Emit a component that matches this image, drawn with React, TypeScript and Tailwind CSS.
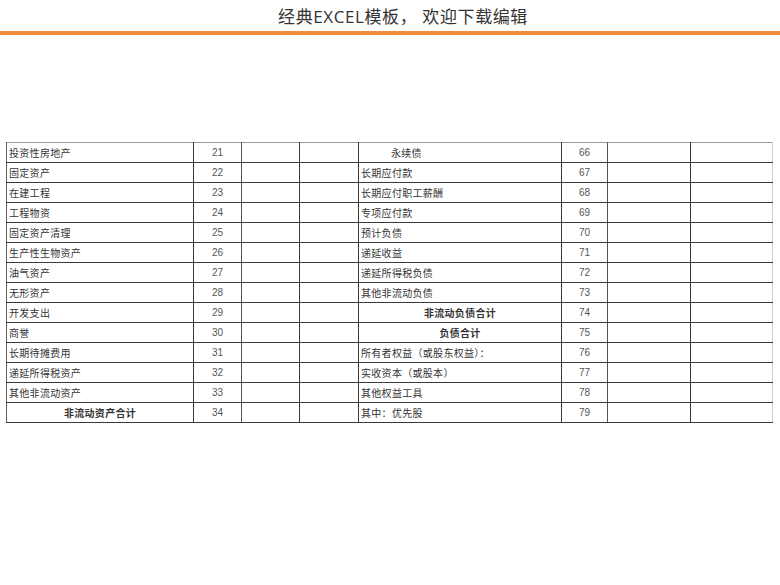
import React from 'react';

type Row = {
  left: string;
  leftNo: number;
  leftBold?: boolean;
  right: string;
  rightNo: number;
  rightBold?: boolean;
  rightIndent?: boolean;
};

const rows: Row[] = [
  { left: '投资性房地产', leftNo: 21, right: '永续债', rightNo: 66, rightIndent: true },
  { left: '固定资产', leftNo: 22, right: '长期应付款', rightNo: 67 },
  { left: '在建工程', leftNo: 23, right: '长期应付职工薪酬', rightNo: 68 },
  { left: '工程物资', leftNo: 24, right: '专项应付款', rightNo: 69 },
  { left: '固定资产清理', leftNo: 25, right: '预计负债', rightNo: 70 },
  { left: '生产性生物资产', leftNo: 26, right: '递延收益', rightNo: 71 },
  { left: '油气资产', leftNo: 27, right: '递延所得税负债', rightNo: 72 },
  { left: '无形资产', leftNo: 28, right: '其他非流动负债', rightNo: 73 },
  { left: '开发支出', leftNo: 29, right: '非流动负债合计', rightNo: 74, rightBold: true },
  { left: '商誉', leftNo: 30, right: '负债合计', rightNo: 75, rightBold: true },
  { left: '长期待摊费用', leftNo: 31, right: '所有者权益（或股东权益）：', rightNo: 76 },
  { left: '递延所得税资产', leftNo: 32, right: '实收资本（或股本）', rightNo: 77 },
  { left: '其他非流动资产', leftNo: 33, right: '其他权益工具', rightNo: 78 },
  { left: '非流动资产合计', leftNo: 34, leftBold: true, right: '其中：优先股', rightNo: 79 },
];

const cell = 'border-b border-[#3a3a3a] h-[20px] p-0 align-middle';
const label = 'text-[10px] text-[#333] px-[2px] tracking-[0.3px]';
const num = 'text-[10px] text-[#555] text-center font-["Liberation_Sans",sans-serif]';

const App: React.FC = () => {
  return (
    <div className="w-[780px] h-[585px] bg-white overflow-hidden font-['Noto_Sans_CJK_SC',sans-serif]">
      <div className="h-[31px] flex items-center justify-center">
        <h1 className="text-[17px] text-[#333] tracking-[0.6px] font-['Open_Sans','Noto_Sans_CJK_SC',sans-serif] pl-[26px] pt-[2px]">
          经典EXCEL模板，&nbsp;欢迎下载编辑
        </h1>
      </div>
      <div className="h-[4px] bg-[#f28a3c]" />

      <div className="pt-[107px] pl-[6px]">
        <table className="table-fixed border-collapse w-[766px] border-t border-t-[#9a9a9a]">
          <colgroup>
            <col className="w-[187px]" />
            <col className="w-[48px]" />
            <col className="w-[58px]" />
            <col className="w-[59px]" />
            <col className="w-[203px]" />
            <col className="w-[46px]" />
            <col className="w-[83px]" />
            <col className="w-[82px]" />
          </colgroup>
          <tbody>
            {rows.map((r) => (
              <tr key={r.leftNo}>
                <td
                  className={`${cell} border-l border-l-[#666] border-r border-r-[#3a3a3a] ${label} ${
                    r.leftBold ? 'font-bold text-center' : ''
                  }`}
                >
                  {r.left}
                </td>
                <td className={`${cell} border-r border-r-[#555] ${num}`}>{r.leftNo}</td>
                <td className={`${cell} border-r border-r-[#3a3a3a]`} />
                <td className={`${cell} border-r border-r-[#3a3a3a]`} />
                <td
                  className={`${cell} border-r border-r-[#3a3a3a] ${label} ${
                    r.rightBold ? 'font-bold text-center' : ''
                  } ${r.rightIndent ? 'pl-[32px]' : ''}`}
                >
                  {r.right}
                </td>
                <td className={`${cell} border-r border-r-[#555] ${num}`}>{r.rightNo}</td>
                <td className={`${cell} border-r border-r-[#3a3a3a]`} />
                <td className={`${cell} border-r border-r-[#d0d0d0]`} />
              </tr>
            ))}
          </tbody>
        </table>
      </div>
    </div>
  );
};

export default App;
